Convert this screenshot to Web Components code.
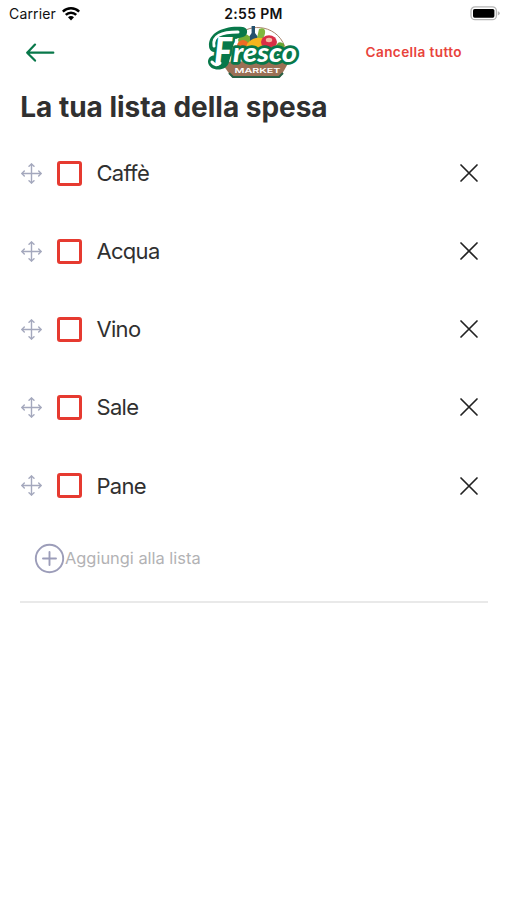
<!DOCTYPE html>
<html lang="it">
<head>
<meta charset="utf-8">
<meta name="viewport" content="width=device-width, initial-scale=1">
<title>Fresco Market</title>
<style>
    body {
        margin: 0;
        background: #fff;
        color: #303030;
        font-family: Inter, "Liberation Sans", sans-serif;
    }
</style>
</head>
<body>
<shopping-app>
    <status-bar slot="status" carrier="Carrier" time="2:55 PM"></status-bar>
    <app-header slot="header" action="Cancella tutto"></app-header>
    <span slot="title">La tua lista della spesa</span>
    <list-item>Caffè</list-item>
    <list-item>Acqua</list-item>
    <list-item>Vino</list-item>
    <list-item>Sale</list-item>
    <list-item>Pane</list-item>
    <add-item slot="footer">Aggiungi alla lista</add-item>
</shopping-app>

<script>
class StatusBar extends HTMLElement {
    constructor() {
        super();
        this.attachShadow({ mode: 'open' });
        this.shadowRoot.innerHTML = `
            <style>
                :host {
                    display: grid;
                    grid-template-columns: 1fr auto 1fr;
                    align-items: center;
                    height: 27px;
                    padding: 0 7px 0 9px;
                    color: #111;
                    font-size: 14px;
                }
                .carrier {
                    display: flex;
                    align-items: center;
                    gap: 6px;
                    letter-spacing: 0.15px;
                }
                .time {
                    margin-right: 2px;
                    font-size: 14px;
                    font-weight: 600;
                    letter-spacing: 0.3px;
                }
                .battery {
                    justify-self: end;
                }
                svg {
                    display: block;
                }
            </style>
            <div class="carrier">
                <span id="carrier"></span>
                <svg width="18" height="14" viewBox="0 0 18 14" fill="none" stroke="#000" stroke-width="2.5">
                    <path d="M0.8 4.6C5.3 0.2 12.7 0.2 17.2 4.6"/>
                    <path d="M3.8 7.9C6.7 5 11.3 5 14.2 7.9"/>
                    <path d="M9 13.4L6 10.3C7.7 8.7 10.3 8.7 12 10.3Z" fill="#000" stroke="none"/>
                </svg>
            </div>
            <span class="time" id="time"></span>
            <svg class="battery" width="31" height="15" viewBox="0 0 31 15">
                <rect x="2" y="0.9" width="25.4" height="12.8" rx="4" fill="#fff" stroke="#b5b5b5" stroke-width="1.3"/>
                <rect x="4" y="2.9" width="21.4" height="8.8" rx="1.6" fill="#000"/>
                <path d="M28.8 5.2Q30.8 5.8 30.8 7.3Q30.8 8.8 28.8 9.4Z" fill="#b5b5b5"/>
            </svg>
        `;
    }

    connectedCallback() {
        this.shadowRoot.getElementById('carrier').textContent = this.getAttribute('carrier');
        this.shadowRoot.getElementById('time').textContent = this.getAttribute('time');
    }
}

class BrandLogo extends HTMLElement {
    constructor() {
        super();
        this.attachShadow({ mode: 'open' });
        this.shadowRoot.innerHTML = `
            <style>
                :host {
                    display: block;
                    width: 108px;
                    height: 64px;
                }
                svg {
                    display: block;
                    overflow: visible;
                }
                .name {
                    font-family: Lato, sans-serif;
                    font-weight: 900;
                    font-style: italic;
                    fill: #fff;
                    stroke: #08784a;
                    stroke-width: 5.4px;
                    stroke-linejoin: round;
                    paint-order: stroke;
                }
                .market {
                    font-family: Inter, sans-serif;
                    font-size: 6px;
                    font-weight: 600;
                    fill: #fff;
                }
            </style>
            <svg width="108" height="64" viewBox="0 0 108 64">
                <!-- basket -->
                <path d="M36 19C44 3 76 2 85 27" fill="none" stroke="#a9846b" stroke-width="1"/>
                <path d="M21 42L90 40L80 57.5H32Z" fill="#9b7055"/>
                <path d="M29 53L33 57H79L83 53" fill="none" stroke="#286044" stroke-width="2"/>
                <!-- vegetables and bottle -->
                <path d="M51.6 6H55V13L58 17V30H49V17L51.6 13Z" fill="#24506d"/>
                <path d="M38 20C40 13 46 12 50 17L50 27H40Z" fill="#75ad35"/>
                <path d="M59 9C66 6 67 13 62 20L57 18Z" fill="#80b73e"/>
                <circle cx="43" cy="26" r="6" fill="#ed6b25"/>
                <path d="M47 24Q54 15 65 19L67 32H46Z" fill="#f4b51e"/>
                <ellipse cx="69" cy="22" rx="8" ry="6.8" fill="#d92e46"/>
                <ellipse cx="69" cy="20" rx="3.2" ry="2.2" fill="#f4b8a4"/>
                <path d="M75 28Q78 19 84 24V32H75Z" fill="#68a431"/>
                <!-- lettering on its green swash -->
                <path d="M9 26C8 13 24 5 43 7C49 8 48 16 43 17L35 19L29 42C27 52 9 52 8 42C8 36 14 34 18 37L20 31C14 34 9 31 9 26Z" fill="#08784a"/>
                <text class="name"><tspan x="14" y="45" font-size="38" textLength="18" lengthAdjust="spacingAndGlyphs">F</tspan><tspan x="33" y="42" font-size="26" textLength="64" lengthAdjust="spacingAndGlyphs">resco</tspan></text>
                <path d="M14 26C12 16 21 12 38 12M20 43Q16 47 12 42" fill="none" stroke="#fff" stroke-width="3" stroke-linecap="round"/>
                <text class="market" x="34.5" y="53.3" textLength="46" lengthAdjust="spacingAndGlyphs">MARKET</text>
            </svg>
        `;
    }
}

class AppHeader extends HTMLElement {
    constructor() {
        super();
        this.attachShadow({ mode: 'open' });
        this.shadowRoot.innerHTML = `
            <style>
                :host {
                    display: grid;
                    grid-template-columns: 1fr 108px 1fr;
                    align-items: center;
                    height: 50px;
                }
                brand-logo {
                    margin: -7px 0;
                }
                button {
                    border: 0;
                    padding: 0;
                    background: none;
                    font: inherit;
                    cursor: pointer;
                }
                .back {
                    justify-self: start;
                    margin-left: 25px;
                }
                .action {
                    justify-self: end;
                    margin-right: 45px;
                    color: #e8433b;
                    font-size: 13.6px;
                    font-weight: 600;
                    letter-spacing: 0.4px;
                    white-space: nowrap;
                }
                svg {
                    display: block;
                }
            </style>
            <button class="back" aria-label="Indietro">
                <svg width="31" height="20" viewBox="0 0 31 20" fill="none" stroke="#08784a" stroke-width="2.2" stroke-linecap="round" stroke-linejoin="round">
                    <path d="M28.3 10.7H2.2M10 2.6L2.2 10.7L10 18.6"/>
                </svg>
            </button>
            <brand-logo></brand-logo>
            <button class="action" id="action"></button>
        `;
    }

    connectedCallback() {
        this.shadowRoot.getElementById('action').textContent = this.getAttribute('action');
    }
}

class ListItem extends HTMLElement {
    constructor() {
        super();
        this.attachShadow({ mode: 'open' });
        this.shadowRoot.innerHTML = `
            <style>
                :host {
                    display: flex;
                    align-items: center;
                    height: 78.15px;
                    padding: 0 28px 0 21px;
                }
                svg {
                    display: block;
                    flex: none;
                }
                .check {
                    box-sizing: border-box;
                    width: 25px;
                    height: 25px;
                    margin: 0 14.5px 0 15px;
                    border: 3px solid #e63a30;
                    border-radius: 3px;
                }
                .label {
                    flex: 1;
                    font-size: 22px;
                    letter-spacing: -0.7px;
                }
            </style>
            <svg width="21" height="21" viewBox="0 0 21 21" fill="none" stroke="#a4a8bd" stroke-width="1.4" stroke-linecap="round" stroke-linejoin="round">
                <path d="M10.5 1V20M1 10.5H20"/>
                <path d="M8 3.3L10.5 0.9L13 3.3M8 17.7L10.5 20.1L13 17.7M3.3 8L0.9 10.5L3.3 13M17.7 8L20.1 10.5L17.7 13"/>
            </svg>
            <div class="check"></div>
            <span class="label"><slot></slot></span>
            <svg width="20" height="20" viewBox="0 0 20 20" fill="none" stroke="#222" stroke-width="1.7" stroke-linecap="round">
                <path d="M2 2L18 18M18 2L2 18"/>
            </svg>
        `;
    }
}

class AddItem extends HTMLElement {
    constructor() {
        super();
        this.attachShadow({ mode: 'open' });
        this.shadowRoot.innerHTML = `
            <style>
                :host {
                    display: flex;
                    align-items: center;
                    height: 75px;
                    margin: 0 19px 0 20px;
                    padding: 0 0 5px 14px;
                    border-bottom: 2px solid #e9e9e9;
                    color: #b2b2b4;
                    font-size: 16.4px;
                }
                svg {
                    display: block;
                }
            </style>
            <svg width="31" height="31" viewBox="0 0 31 31" fill="none" stroke="#9c9db9" stroke-width="1.9" stroke-linecap="round">
                <circle cx="15.5" cy="15.5" r="13.7"/>
                <path d="M15.5 9V22M9 15.5H22"/>
            </svg>
            <slot></slot>
        `;
    }
}

class ShoppingApp extends HTMLElement {
    constructor() {
        super();
        this.attachShadow({ mode: 'open' });
        this.shadowRoot.innerHTML = `
            <style>
                :host {
                    display: block;
                    height: 900px;
                    overflow: hidden;
                }
                h1 {
                    margin: 13px 0 10px 20.3px;
                    font-size: 28px;
                    line-height: 34px;
                    font-weight: 700;
                    letter-spacing: -0.02px;
                }
                .footer {
                    margin-top: -4px;
                }
            </style>
            <slot name="status"></slot>
            <slot name="header"></slot>
            <h1><slot name="title"></slot></h1>
            <slot></slot>
            <div class="footer"><slot name="footer"></slot></div>
        `;
    }
}

customElements.define('status-bar', StatusBar);
customElements.define('brand-logo', BrandLogo);
customElements.define('app-header', AppHeader);
customElements.define('list-item', ListItem);
customElements.define('add-item', AddItem);
customElements.define('shopping-app', ShoppingApp);
</script>
</body>
</html>
